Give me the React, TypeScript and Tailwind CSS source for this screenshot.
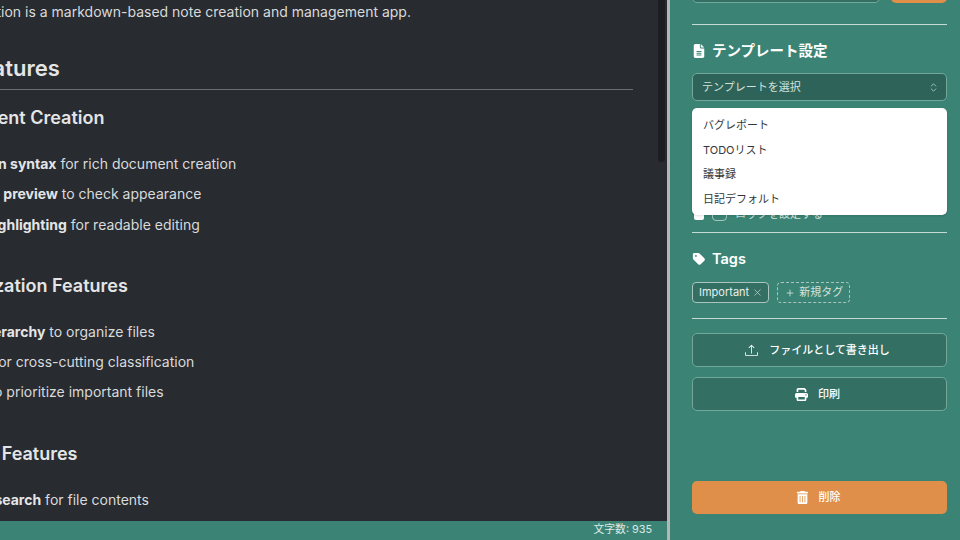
import { ChevronsUpDown, Plus, X } from "lucide-react";
import { BsUpload } from "react-icons/bs";
import { FaFileLines, FaPrint, FaTag, FaTrashCan } from "react-icons/fa6";

const font = { fontFamily: '"Inter", "Noto Sans CJK JP", sans-serif' };

const sections = [
  {
    title: "Document Creation",
    items: [
      ["Markdown syntax", " for rich document creation"],
      ["Real-time preview", " to check appearance"],
      ["Syntax highlighting", " for readable editing"],
    ],
  },
  {
    title: "Organization Features",
    items: [
      ["Folder hierarchy", " to organize files"],
      ["Tagging", " for cross-cutting classification"],
      ["Pinning", " to prioritize important files"],
    ],
  },
];

function Preview() {
  return (
    <div className="flex-1 min-h-0 overflow-hidden relative">
      <div className="-ml-[66px] w-[699px] text-[14px] leading-[24px] text-[#d9dadb]">
        <p className="pl-[3px]">This solution is a markdown-based note creation and management app.</p>
        <h2 className="mt-[28px] pb-[4px] border-b border-[#6c6e71] text-[22px] leading-[33px] font-semibold text-[#e4e5e6]">
          All Features
        </h2>
        {sections.map((section) => (
          <div key={section.title}>
            <h3 className="mt-[14px] mb-[21px] pl-[2px] text-[18px] leading-[27px] font-semibold text-[#e4e5e6]">
              {section.title}
            </h3>
            <ul className="flex flex-col gap-[6.25px] mb-[35px]">
              {section.items.map(([bold, rest]) => (
                <li key={bold}>
                  <strong className="font-bold text-[#e4e5e6]">{bold}</strong>
                  {rest}
                </li>
              ))}
            </ul>
          </div>
        ))}
        <h3 className="pt-[1px] mb-[21px] pl-[2px] text-[18px] leading-[27px] font-semibold text-[#e4e5e6]">
          Search Features
        </h3>
        <p>
          <strong className="font-bold text-[#e4e5e6]">Full-text search</strong> for file contents
        </p>
      </div>
      {/* scrollbar thumb */}
      <div className="absolute right-[2px] top-0 w-[7px] h-[162px] rounded-b-full bg-[#1c1e22]" />
    </div>
  );
}

function Sidebar() {
  return (
    <aside className="w-[290px] shrink-0 bg-[#3b8475] pl-[22px] pr-[13px] text-white overflow-hidden relative flex flex-col">
      <div className="flex gap-[11px] -mt-[30px] h-[33px] shrink-0">
        <div className="w-[188px] rounded-[5px] border border-[#72a89b] bg-[#346f64]" />
        <div className="w-[56px] rounded-[5px] bg-[#df8f4a]" />
      </div>
      <hr className="mt-[21px] border-[#c5dad5]" />

      <h4 className="mt-[16px] flex items-center gap-[6px] text-[14.5px] leading-[20px] font-semibold">
        <FaFileLines className="size-[14px]" />
        テンプレート設定
      </h4>
      <div className="mt-[12px] h-[28px] rounded-[5px] border border-[#72a89b] bg-[#2e6359] flex items-center justify-between pl-[9px] pr-[7px] text-[11px] text-[#d3e2de]">
        テンプレートを選択
        <ChevronsUpDown className="size-[11px] text-[#a9c5be]" />
      </div>
      <div className="mt-[103px] h-[21px] flex items-center gap-[8px] text-[11px] text-[#d3e2de] shrink-0">
        <span className="size-[10px] rounded-[2px] bg-white ml-[2px]" />
        <span className="w-[15px] h-[12px] rounded-[4px] border border-[#a9c5be]" />
        ロックを設定する
      </div>
      <hr className="mt-[7px] border-[#c5dad5]" />

      <h4 className="mt-[16px] flex items-center gap-[6px] text-[14.5px] leading-[20px] font-semibold">
        <FaTag className="size-[14px]" />
        Tags
      </h4>
      <div className="mt-[13px] flex gap-[8px] text-[11px]">
        <span className="h-[21px] pl-[6px] pr-[5px] rounded-[4px] border border-[#a9c5be] bg-[#346f64] flex items-center gap-[3px] text-[#e6efed]">
          Important
          <X className="size-[11px] text-[#c5dad5]" strokeWidth={1.5} />
        </span>
        <span className="h-[21px] pl-[7px] pr-[6px] rounded-[4px] border border-dashed border-[#a9c5be] flex items-center gap-[4px] text-[#d3e2de]">
          <Plus className="size-[10px]" />
          新規タグ
        </span>
      </div>
      <hr className="mt-[15px] border-[#c5dad5]" />

      <button className="mt-[14px] h-[34px] pr-[4px] rounded-[5px] border border-[#72a89b] bg-[#346f64] flex items-center justify-center gap-[11px] text-[11px] font-medium">
        <BsUpload className="size-[13px]" />
        ファイルとして書き出し
      </button>
      <button className="mt-[10px] h-[34px] pr-[4px] rounded-[5px] border border-[#72a89b] bg-[#346f64] flex items-center justify-center gap-[10px] text-[11px] font-medium">
        <FaPrint className="size-[13px]" />
        印刷
      </button>
      <button className="mt-[70px] h-[33px] pr-[3px] rounded-[5px] bg-[#df8f4a] flex items-center justify-center gap-[10px] text-[11px] font-medium">
        <FaTrashCan className="size-[13px]" />
        削除
      </button>

      {/* template dropdown menu */}
      <ul className="absolute left-[22px] top-[108px] w-[255px] h-[107px] rounded-[5px] bg-white py-[5px] text-[11px] text-[#33373b] shadow">
        {["バグレポート", "TODOリスト", "議事録", "日記デフォルト"].map((name) => (
          <li key={name} className="h-[24.7px] pl-[11px] flex items-center">
            {name}
          </li>
        ))}
      </ul>
    </aside>
  );
}

export default function App() {
  return (
    <div className="w-[960px] h-[540px] flex overflow-hidden bg-[#282b30]" style={font}>
      <main className="w-[667px] shrink-0 flex flex-col min-h-0">
        <Preview />
        <div className="h-[19px] shrink-0 bg-[#3b8475] flex items-center justify-end pr-[15px] text-[10.8px] text-[#dce8e5]">
          文字数: 935
        </div>
      </main>
      <div className="w-[3px] shrink-0 bg-[#b4b6b8]" />
      <Sidebar />
    </div>
  );
}
